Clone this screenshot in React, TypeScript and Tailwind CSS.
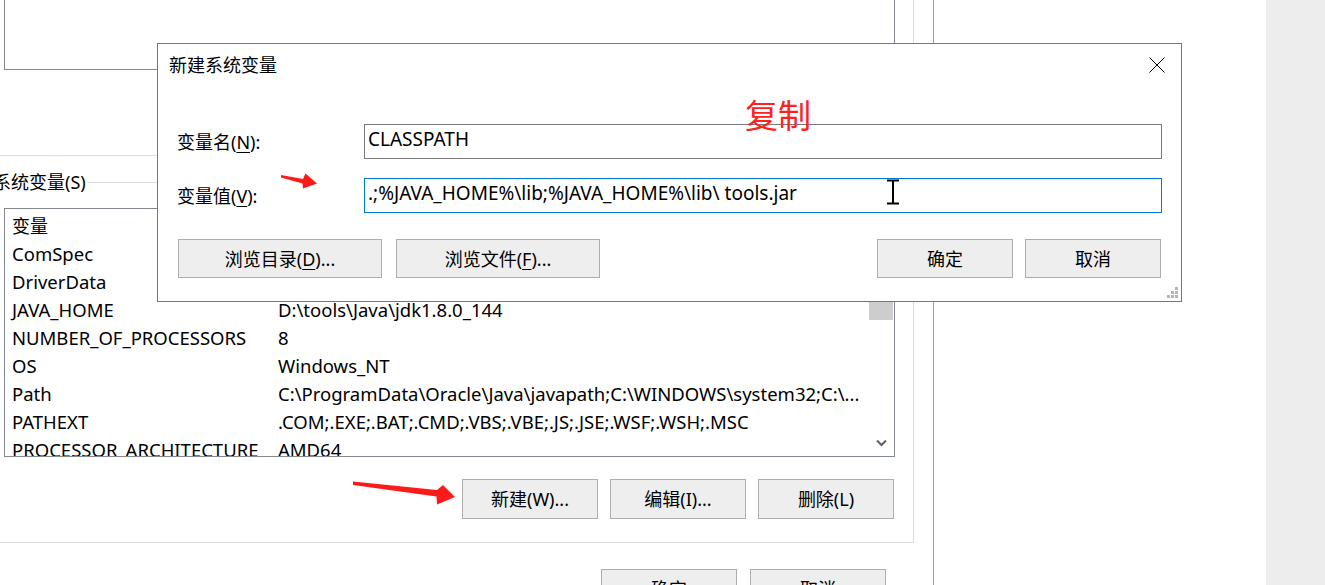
import React from "react";

const rows: [string, string][] = [
  ["ComSpec", "C:\\WINDOWS\\system32\\cmd.exe"],
  ["DriverData", "C:\\Windows\\System32\\Drivers\\DriverData"],
  ["JAVA_HOME", "D:\\tools\\Java\\jdk1.8.0_144"],
  ["NUMBER_OF_PROCESSORS", "8"],
  ["OS", "Windows_NT"],
  ["Path", "C:\\ProgramData\\Oracle\\Java\\javapath;C:\\WINDOWS\\system32;C:\\..."],
  ["PATHEXT", ".COM;.EXE;.BAT;.CMD;.VBS;.VBE;.JS;.JSE;.WSF;.WSH;.MSC"],
  ["PROCESSOR_ARCHITECTURE", "AMD64"],
];

function Btn({ children, className }: { children: React.ReactNode; className: string }) {
  return (
    <div
      className={
        "flex shrink-0 items-center justify-center border border-[#adadad] bg-[#eeeeee] text-[18px] leading-none text-black " +
        className
      }
    >
      {children}
    </div>
  );
}

export default function App() {
  return (
    <div className="relative flex h-[585px] w-[1325px] overflow-hidden bg-white font-['Noto_Sans','Noto_Sans_CJK_SC',sans-serif] text-[18px] text-black">
      <div className="relative h-full w-[1266px] shrink-0">
        {/* background window */}
        <div className="flex h-full w-[934px] flex-col border-r border-[#a0a0a0]">
          <div className="h-[156px] w-[914px] shrink-0 border-r border-b border-[#dcdcdc]">
            <div className="ml-[4px] h-[70px] w-[891px] border-x border-b border-[#828790] bg-white" />
          </div>
          <div className="relative mt-[26px] flex h-[361px] w-[914px] shrink-0 flex-col border-t border-r border-b border-[#dcdcdc]">
            <span className="absolute left-[-7px] top-[-13px] bg-white pr-[2px] leading-[24px]">系统变量(S)</span>
            <div className="ml-[4px] mt-[25px] flex h-[249px] w-[891px] shrink-0 border border-[#828790] bg-white">
              <div className="flex-1 overflow-hidden pt-[3px] pl-[7px] text-[18.5px]">
                <div className="flex h-[28px] items-center whitespace-nowrap text-[18px]">
                  <span className="w-[266px] shrink-0">变量</span>
                  <span>值</span>
                </div>
                {rows.map(([k, v]) => (
                  <div key={k} className="flex h-[28px] items-center whitespace-nowrap">
                    <span className="w-[266px] shrink-0">{k}</span>
                    <span>{v}</span>
                  </div>
                ))}
              </div>
              <div className="flex w-[25px] shrink-0 flex-col">
                <div className="mt-[17px] h-[94px] w-[24px] bg-[#cdcdcd]" />
                <div className="mt-auto mb-[9px] flex justify-center">
                  <svg width="11" height="8" viewBox="0 0 11 8">
                    <path d="M1 1.5 L5.5 6 L10 1.5" fill="none" stroke="#606060" strokeWidth="2" />
                  </svg>
                </div>
              </div>
            </div>
            <div className="mt-[22px] flex justify-end gap-[12px] pr-[19px]">
              <Btn className="h-[40px] w-[136px]">新建(W)...</Btn>
              <Btn className="h-[40px] w-[136px]">编辑(I)...</Btn>
              <Btn className="h-[40px] w-[136px]">删除(L)</Btn>
            </div>
          </div>
          <div className="mt-[26px] flex justify-end gap-[13px] pr-[47px]">
            <Btn className="h-[40px] w-[136px]">确定</Btn>
            <Btn className="h-[40px] w-[136px]">取消</Btn>
          </div>
        </div>

        {/* dialog */}
        <div className="absolute left-[157px] top-[43px] flex h-[259px] w-[1025px] flex-col border border-[#777777] bg-white">
          <div className="flex h-[42px] shrink-0 items-center justify-between pl-[11px] pr-[16px]">
            <span className="leading-none">新建系统变量</span>
            <svg width="16" height="16" viewBox="0 0 16 16">
              <path d="M0.5 0.5 L15.5 15.5 M15.5 0.5 L0.5 15.5" stroke="#000" strokeWidth="1" />
            </svg>
          </div>
          <div className="mt-[38px] flex items-center px-[19px]">
            <span className="w-[187px] shrink-0 leading-none">
              变量名(<span className="underline underline-offset-[3px]">N</span>):
            </span>
            <div className="flex h-[35px] flex-1 items-center border border-[#7a7a7a] pl-[3px] pb-[4px] text-[19px] leading-none">
              CLASSPATH
            </div>
          </div>
          <div className="mt-[19px] flex items-center px-[19px]">
            <span className="w-[187px] shrink-0 leading-none">
              变量值(<span className="underline underline-offset-[3px]">V</span>):
            </span>
            <div className="flex h-[35px] flex-1 items-center border border-[#0078d7] pl-[3px] pb-[4px] text-[19px] leading-none whitespace-nowrap">
              .;%JAVA_HOME%\lib;%JAVA_HOME%\lib\ tools.jar
            </div>
          </div>
          <div className="mt-[26px] flex items-center gap-[14px] px-[20px]">
            <Btn className="h-[39px] w-[204px]">
              浏览目录(<span className="underline underline-offset-[3px]">D</span>)...
            </Btn>
            <Btn className="h-[39px] w-[204px]">
              浏览文件(<span className="underline underline-offset-[3px]">F</span>)...
            </Btn>
            <div className="flex-1" />
            <div className="flex gap-[12px]">
              <Btn className="h-[39px] w-[136px]">确定</Btn>
              <Btn className="h-[39px] w-[136px]">取消</Btn>
            </div>
          </div>
          <svg className="absolute right-[2px] bottom-[2px]" width="12" height="12" viewBox="0 0 12 12">
            <rect x="8" y="0" width="3" height="3" fill="#b4b4b4" />
            <rect x="4" y="4" width="3" height="3" fill="#b4b4b4" />
            <rect x="8" y="4" width="3" height="3" fill="#b4b4b4" />
            <rect x="0" y="8" width="3" height="3" fill="#b4b4b4" />
            <rect x="4" y="8" width="3" height="3" fill="#b4b4b4" />
            <rect x="8" y="8" width="3" height="3" fill="#b4b4b4" />
          </svg>
        </div>

        {/* annotations */}
        <span className="absolute left-[745px] top-[99px] text-[33px] leading-none text-[#ff2020]">复制</span>
        <svg className="pointer-events-none absolute left-0 top-0" width="1266" height="585" viewBox="0 0 1266 585">
          <polygon points="281,175 303,179 305.5,173.5 317,183.5 303,188.5 302.5,183.5 281,177.5" fill="#ff1a1a" />
          <polygon points="353,481.5 437,490 443,485 455,497 437,504.5 436.5,496.5 353,485" fill="#ff1a1a" />
          <path d="M887 180.5 H899 M893 181 V203 M887 203.5 H899" stroke="#000" strokeWidth="2" fill="none" />
        </svg>
      </div>
      <div className="h-full flex-1 bg-[#ededed]" />
    </div>
  );
}
